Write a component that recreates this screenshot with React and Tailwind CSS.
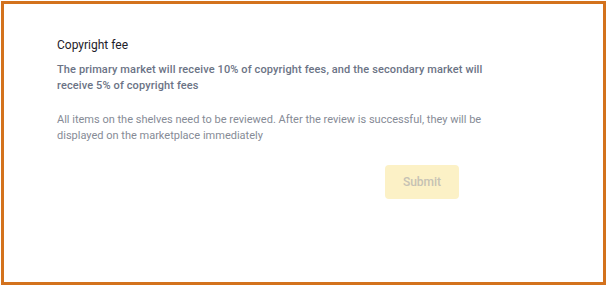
export default function App() {
    return (
        <div className="w-[609px] h-[288px] bg-white pt-px pl-px" style={{ fontFamily: 'Roboto, "Liberation Sans", sans-serif' }}>
            <div className="w-[605px] h-[284px] border-[3px] border-[#d3721d] pl-[53px] pt-[32px]">
                <div className="w-[440px]">
                    <h2 className="text-[12px] leading-[18px] text-[#1d2129]">Copyright fee</h2>
                    <p className="mt-[8px] text-[11px] leading-[16px] tracking-[0.12px] font-medium text-[#6b7385]">
                        The primary market will receive 10% of copyright fees, and the secondary market will receive 5% of copyright fees
                    </p>
                    <p className="mt-[18px] text-[11px] leading-[16px] text-[#868b96]">
                        All items on the shelves need to be reviewed. After the review is successful, they will be displayed on the marketplace immediately
                    </p>
                </div>
                <div className="mt-[21px] pl-[328px]">
                    <button
                        type="button"
                        disabled
                        className="w-[74px] h-[34px] rounded-[4px] bg-[#fcf1c6] text-[12px] font-medium text-[#c6c2b4]"
                    >
                        Submit
                    </button>
                </div>
            </div>
        </div>
    );
}
